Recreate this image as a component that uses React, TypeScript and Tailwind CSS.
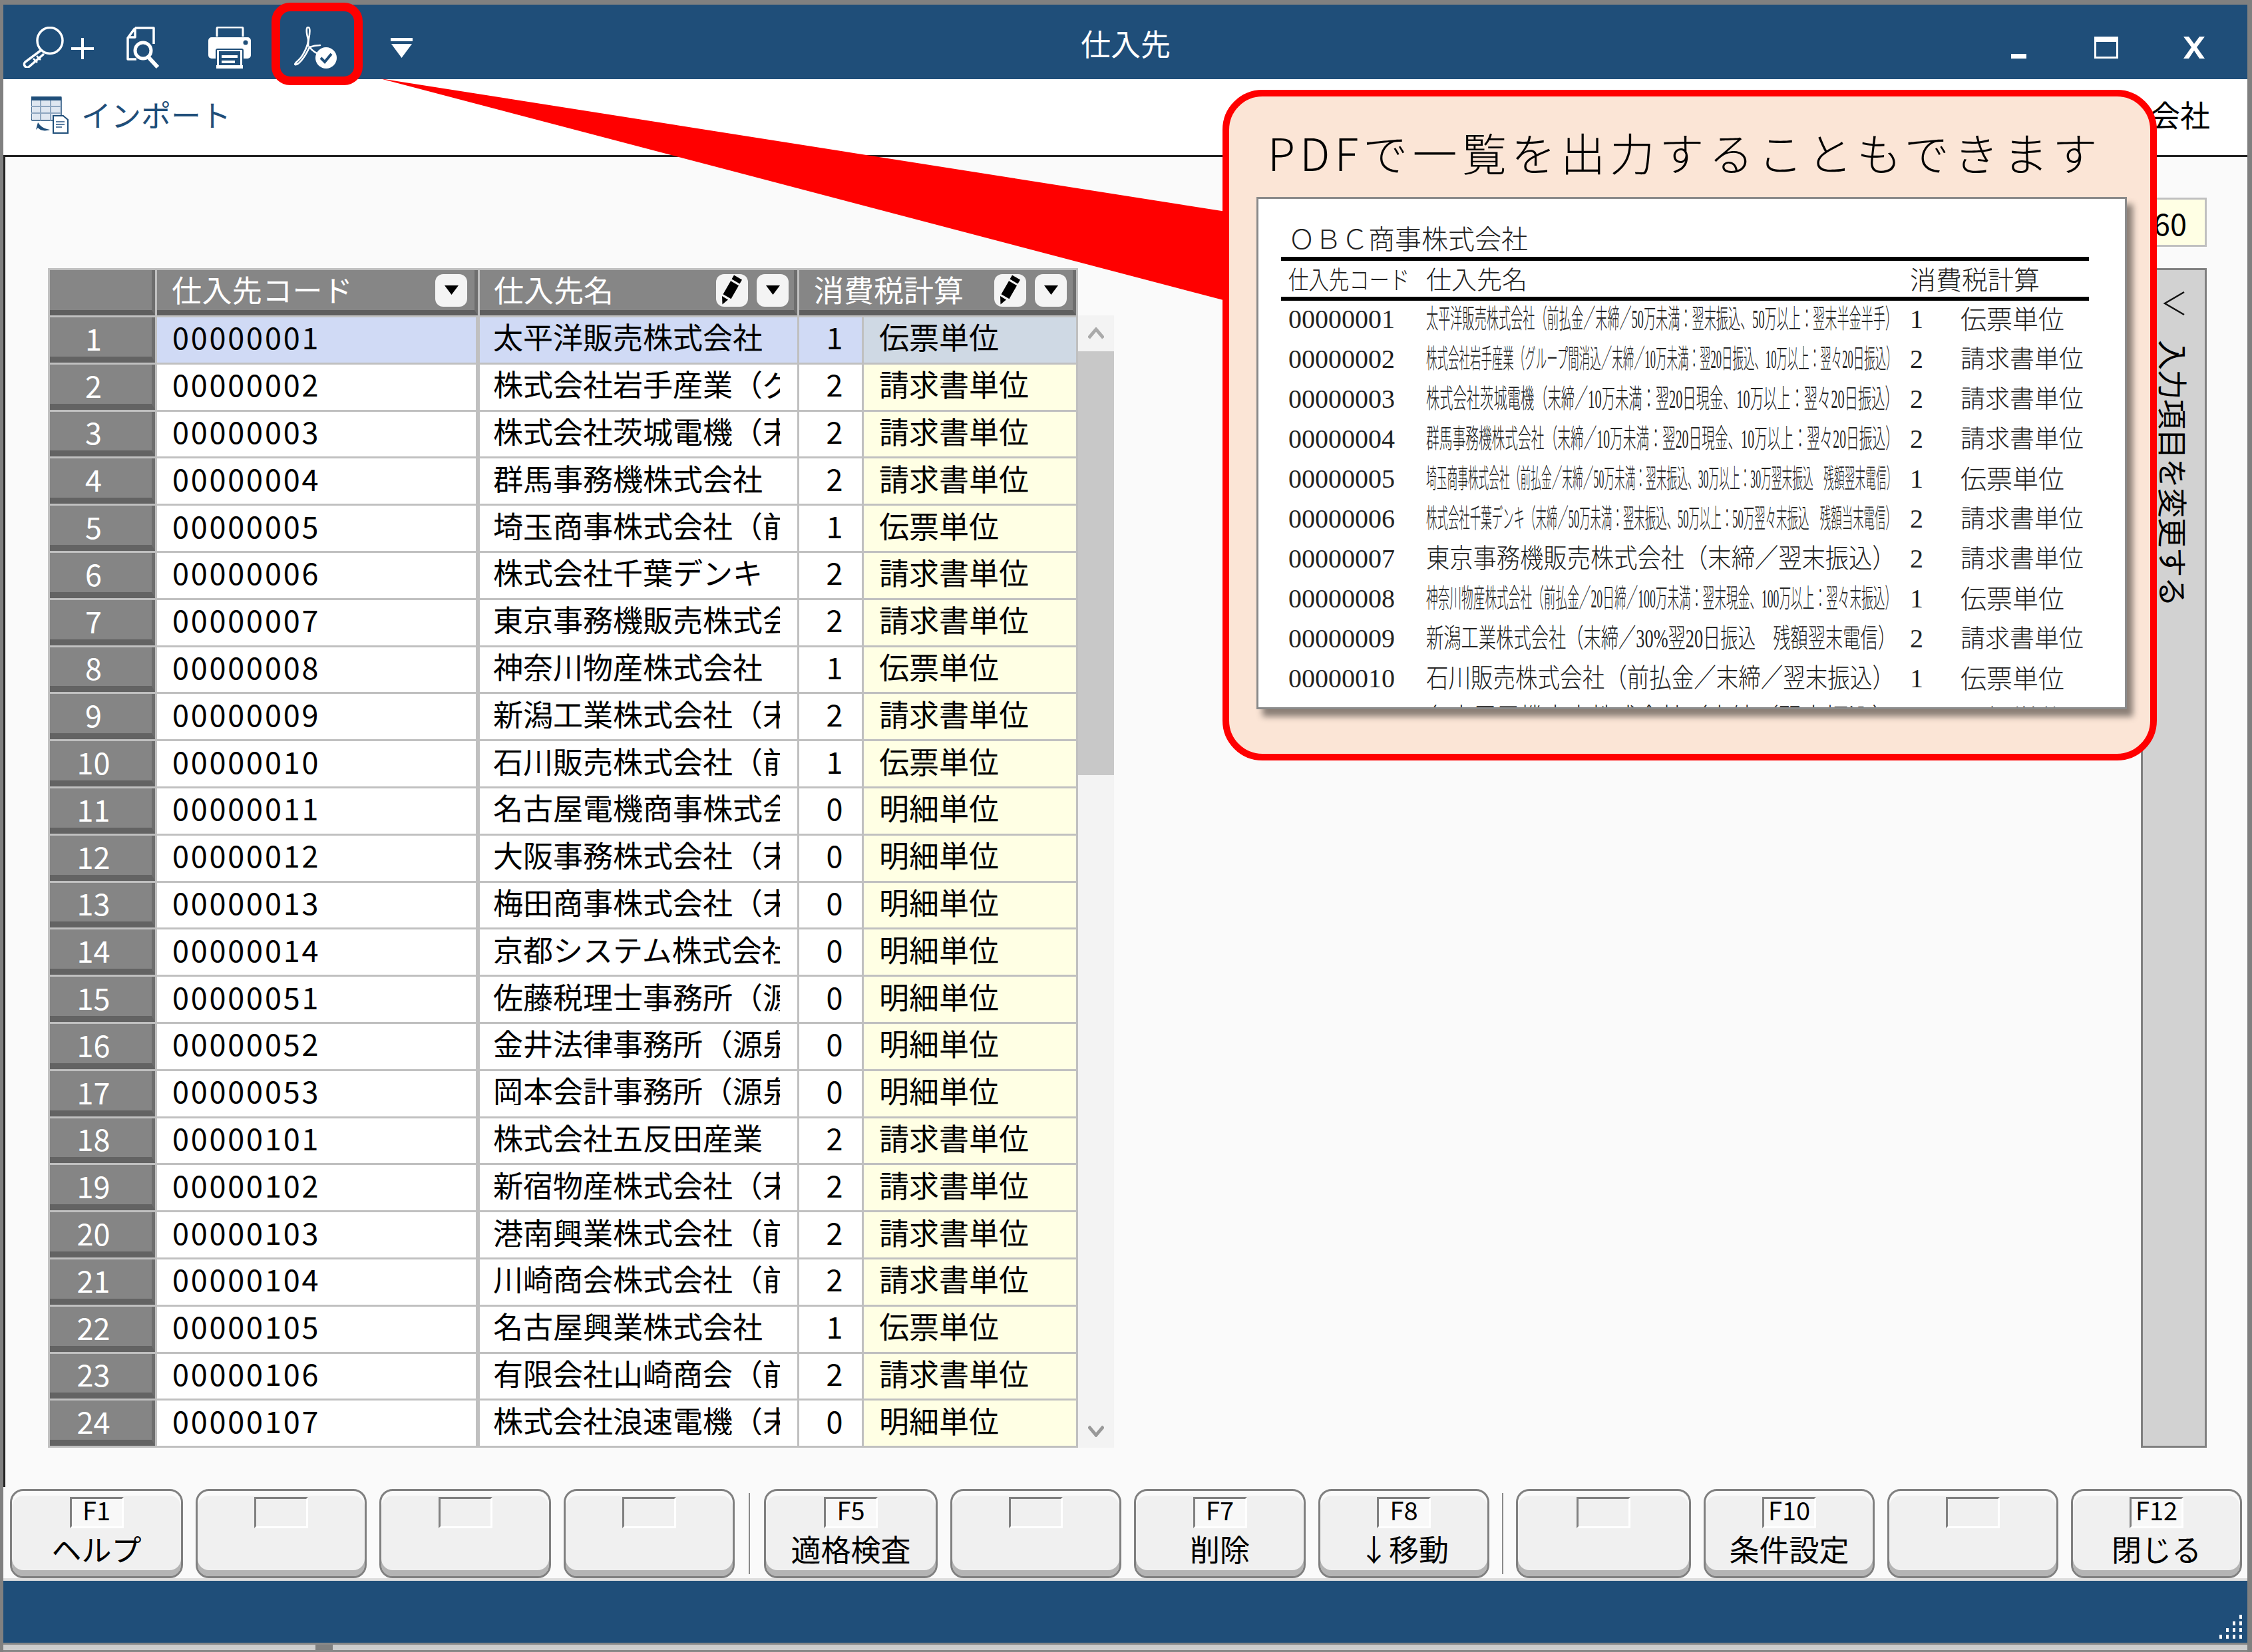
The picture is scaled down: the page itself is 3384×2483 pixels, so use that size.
import React from 'react';

const BLUE = '#1f4e79';

const rows: [string, string, string, string][] = [
  ['00000001', '太平洋販売株式会社', '1', '伝票単位'],
  ['00000002', '株式会社岩手産業（グループ間消込', '2', '請求書単位'],
  ['00000003', '株式会社茨城電機（末締', '2', '請求書単位'],
  ['00000004', '群馬事務機株式会社', '2', '請求書単位'],
  ['00000005', '埼玉商事株式会社（前払金', '1', '伝票単位'],
  ['00000006', '株式会社千葉デンキ', '2', '請求書単位'],
  ['00000007', '東京事務機販売株式会社', '2', '請求書単位'],
  ['00000008', '神奈川物産株式会社', '1', '伝票単位'],
  ['00000009', '新潟工業株式会社（末締', '2', '請求書単位'],
  ['00000010', '石川販売株式会社（前払金', '1', '伝票単位'],
  ['00000011', '名古屋電機商事株式会社', '0', '明細単位'],
  ['00000012', '大阪事務株式会社（末締', '0', '明細単位'],
  ['00000013', '梅田商事株式会社（末締', '0', '明細単位'],
  ['00000014', '京都システム株式会社', '0', '明細単位'],
  ['00000051', '佐藤税理士事務所（源泉', '0', '明細単位'],
  ['00000052', '金井法律事務所（源泉', '0', '明細単位'],
  ['00000053', '岡本会計事務所（源泉', '0', '明細単位'],
  ['00000101', '株式会社五反田産業', '2', '請求書単位'],
  ['00000102', '新宿物産株式会社（末締', '2', '請求書単位'],
  ['00000103', '港南興業株式会社（前払金', '2', '請求書単位'],
  ['00000104', '川崎商会株式会社（前払金', '2', '請求書単位'],
  ['00000105', '名古屋興業株式会社', '1', '伝票単位'],
  ['00000106', '有限会社山崎商会（前払金', '2', '請求書単位'],
  ['00000107', '株式会社浪速電機（末締', '0', '明細単位'],
];

const reportRows: { code: string; name: string; squeeze: string; flag: string; unit: string }[] = [
  { code: '00000001', name: '太平洋販売株式会社（前払金／末締／50万未満：翌末振込、50万以上：翌末半金半手）', squeeze: 'scale-x-[0.454]', flag: '1', unit: '伝票単位' },
  { code: '00000002', name: '株式会社岩手産業（グループ間消込／末締／10万未満：翌20日振込、10万以上：翌々20日振込）', squeeze: 'scale-x-[0.412]', flag: '2', unit: '請求書単位' },
  { code: '00000003', name: '株式会社茨城電機（末締／10万未満：翌20日現金、10万以上：翌々20日振込）', squeeze: 'scale-x-[0.507]', flag: '2', unit: '請求書単位' },
  { code: '00000004', name: '群馬事務機株式会社（末締／10万未満：翌20日現金、10万以上：翌々20日振込）', squeeze: 'scale-x-[0.493]', flag: '2', unit: '請求書単位' },
  { code: '00000005', name: '埼玉商事株式会社（前払金／末締／50万未満：翌末振込、30万以上：30万翌末振込　残額翌末電信）', squeeze: 'scale-x-[0.393]', flag: '1', unit: '伝票単位' },
  { code: '00000006', name: '株式会社千葉デンキ（末締／50万未満：翌末振込、50万以上：50万翌々末振込　残額当末電信）', squeeze: 'scale-x-[0.411]', flag: '2', unit: '請求書単位' },
  { code: '00000007', name: '東京事務機販売株式会社（末締／翌末振込）', squeeze: 'scale-x-[0.882]', flag: '2', unit: '請求書単位' },
  { code: '00000008', name: '神奈川物産株式会社（前払金／20日締／100万未満：翌末現金、100万以上：翌々末振込）', squeeze: 'scale-x-[0.442]', flag: '1', unit: '伝票単位' },
  { code: '00000009', name: '新潟工業株式会社（末締／30%翌20日振込　残額翌末電信）', squeeze: 'scale-x-[0.657]', flag: '2', unit: '請求書単位' },
  { code: '00000010', name: '石川販売株式会社（前払金／末締／翌末振込）', squeeze: 'scale-x-[0.838]', flag: '1', unit: '伝票単位' },
  { code: '00000011', name: '名古屋電機商事株式会社（末締／翌末振込）', squeeze: 'scale-x-[0.882]', flag: '0', unit: '明細単位' },
];

const fkeys: { width: string; f?: string; label?: string; sep?: string }[] = [
  { width: 'w-[260px]', f: 'F1', label: 'ヘルプ' },
  { width: 'w-[257px]' },
  { width: 'w-[258px]' },
  { width: 'w-[257px]', sep: 'mx-[2px]' },
  { width: 'w-[261px]', f: 'F5', label: '適格検査' },
  { width: 'w-[257px]' },
  { width: 'w-[258px]', f: 'F7', label: '削除' },
  { width: 'w-[257px]', f: 'F8', label: '↓移動', sep: 'mx-0' },
  { width: 'w-[263px]' },
  { width: 'w-[257px]', f: 'F10', label: '条件設定' },
  { width: 'w-[257px]' },
  { width: 'w-[257px]', f: 'F12', label: '閉じる' },
];

const ZoomIcon = () => (
  <svg width="108" height="62" viewBox="0 0 108 62" fill="none" stroke="#fff">
    <ellipse cx="41" cy="21" rx="19" ry="19.5" strokeWidth="3.5" />
    <path d="M27 36L4 53a4 4 0 0 0 6 7L32 41" strokeWidth="3.5" />
    <path d="M21 44l6 6M16 48l6 6" strokeWidth="2.5" />
    <path d="M73 33h34M90 17v32" strokeWidth="4" />
  </svg>
);

const DocSearchIcon = () => (
  <svg width="50" height="63" viewBox="0 0 50 63" fill="none" stroke="#fff">
    <path d="M13 2H41V26M13 2L2 17V49H15M13 2V16H2" strokeWidth="3.5" strokeLinejoin="round" />
    <circle cx="25" cy="36" r="12" strokeWidth="5" />
    <path d="M33 46L47 61" strokeWidth="6" />
  </svg>
);

const PrinterIcon = () => (
  <svg width="64" height="63" viewBox="0 0 64 63">
    <path d="M13 15V3a2 2 0 0 1 2-2H50a2 2 0 0 1 2 2V15" fill="none" stroke="#fff" strokeWidth="3" />
    <rect x="0" y="16" width="64" height="32" rx="5" fill="#fff" />
    <circle cx="56" cy="24" r="3.5" fill={BLUE} />
    <rect x="12" y="34" width="40" height="29" rx="2" fill="#fff" stroke={BLUE} strokeWidth="2" />
    <rect x="16" y="37" width="32" height="23" fill={BLUE} />
    <rect x="20" y="43" width="24" height="4" fill="#fff" />
    <rect x="20" y="51" width="20" height="4" fill="#fff" />
    <rect x="12" y="58" width="40" height="5" fill="#fff" />
  </svg>
);

const PdfIcon = () => (
  <svg width="64" height="63" viewBox="0 0 64 63">
    <path
      d="M21 1c-3 0-3 7 0 18c1 8 -8 26 -15 32c-5 4 -6 7 -3 6c5-1 13-11 20-26c6 7 12 10 16 10M21 1c3 0 3 7 1 17c-1 5 -1 8 -1 11M23 31c5-2 11-3 16-3"
      fill="none"
      stroke="#fff"
      strokeWidth="2.6"
      strokeLinecap="round"
    />
    <circle cx="48" cy="47" r="16" fill="#fff" />
    <path d="M40 47l6 6l10-12" fill="none" stroke={BLUE} strokeWidth="4" />
  </svg>
);

const MenuArrow = () => (
  <svg width="33" height="30" viewBox="0 0 33 30" fill="#fff">
    <rect x="0" y="0" width="33" height="5" />
    <path d="M1 9H32L16.5 30Z" />
  </svg>
);

const ImportIcon = () => (
  <svg width="56" height="56" viewBox="0 0 56 56">
    <rect x="0" y="0" width="45" height="36" rx="2" fill="#dfe7f1" stroke={BLUE} strokeWidth="1.5" />
    <rect x="0" y="0" width="45" height="6" fill={BLUE} />
    <path d="M0 15H45M0 25H45M14 6V36M29 6V36" stroke="#8ea6c0" strokeWidth="2" />
    <path d="M7 50L10 39L13 43C17 47 22 49 28 50C20 53 13 51 10 47Z" fill={BLUE} />
    <path d="M33 29H48L55 35V55H33Z" fill="#fff" stroke={BLUE} strokeWidth="2" />
    <path d="M37 38H50M37 42H50M37 46H46" stroke="#5b7da0" strokeWidth="2" />
  </svg>
);

const DropButton = () => (
  <span className="flex h-[49px] w-[48px] shrink-0 items-center justify-center rounded-[12px] bg-[#f4f4f4]">
    <svg width="21" height="14" viewBox="0 0 21 14">
      <path d="M0 0H21L10.5 14Z" fill="#000" />
    </svg>
  </span>
);

const PencilButton = () => (
  <span className="flex h-[49px] w-[48px] shrink-0 items-center justify-center rounded-[12px] bg-[#f4f4f4]">
    <svg width="48" height="49" viewBox="0 0 48 49" fill="#000">
      <path d="M27 1.5L39 8.5L35.5 14.6L23.5 7.6Z" />
      <path d="M22 10.2L34 17.2L22.5 37.2L10.5 30.2Z" />
      <path d="M9 33L18 38.5L9.5 45.5Z" />
    </svg>
  </span>
);

const headCell = 'flex items-center border-r-[5px] border-b-[8px] border-r-[#6e6e6e] border-b-[#5f5f5f] bg-[#868686] text-white';

export default function App() {
  return (
    <div className="relative h-[2483px] w-[3384px] overflow-hidden bg-white text-[45px] leading-none text-black [font-family:'Noto_Sans_CJK_JP',sans-serif]">
      <div className="flex h-full flex-col border-t-[7px] border-r-[7px] border-l-[5px] border-[#808080]">
        {/* title bar */}
        <div className="flex h-[112px] shrink-0 items-center bg-[#1f4e79] text-white">
          <div className="flex flex-1 items-start pt-[17px] pl-[29px]">
            <ZoomIcon />
            <span className="ml-[48px]"><DocSearchIcon /></span>
            <span className="ml-[73px]"><PrinterIcon /></span>
            <span className="ml-[65px]"><PdfIcon /></span>
            <span className="mt-[17px] ml-[81px]"><MenuArrow /></span>
          </div>
          <span className="ml-[36px] pt-[3px]">仕入先</span>
          <div className="flex flex-1 justify-end pt-[17px] pr-[64px]">
            <svg width="291" height="34" viewBox="0 0 291 34" fill="#fff">
              <rect x="0" y="26" width="23" height="7" />
              <path d="M125 0H161V33H125ZM128 8V30H158V8Z" fillRule="evenodd" />
              <path d="M259 0H267L275 11L283 0H291L279 16L291 33H283L275 21L267 33H259L271 16Z" />
            </svg>
          </div>
        </div>

        {/* toolbar */}
        <div className="flex h-[117px] shrink-0 items-center justify-between border-b-[3px] border-[#222] bg-white pr-[56px] pl-[42px]">
          <div className="flex items-center gap-[19px]">
            <span className="mt-[-6px]"><ImportIcon /></span>
            <span className="mt-[-10px] text-[#1f4e79]">インポート</span>
          </div>
          <span className="mt-[-10px]">ＯＢＣ商事株式会社</span>
        </div>

        {/* main */}
        <div className="flex min-h-0 flex-1 justify-between border-l-[3px] border-[#222] bg-[#fafafa] pr-[61px] pl-[64px]">
          <div className="flex items-start pt-[167px]">
            <div className="grid grid-cols-[158px_482px_477px_94px_319px] grid-rows-[68px_repeat(24,67.8px)] gap-[3px] border-[3px] border-[#c0c0c0] bg-[#c0c0c0]">
              <div className={headCell} />
              <div className={`${headCell} justify-between pr-[11px] pl-[22px]`}>
                <span className="mt-[-4px] tracking-[0.4px]">仕入先コード</span>
                <DropButton />
              </div>
              <div className={`${headCell} justify-between pr-[8px] pl-[21px]`}>
                <span className="mt-[-4px]">仕入先名</span>
                <span className="flex gap-[13px]"><PencilButton /><DropButton /></span>
              </div>
              <div className={`${headCell} col-span-2 justify-between pr-[9px] pl-[22px]`}>
                <span className="mt-[-4px]">消費税計算</span>
                <span className="flex gap-[13px]"><PencilButton /><DropButton /></span>
              </div>
              {rows.map(([code, name, flag, unit], i) => (
                <React.Fragment key={code}>
                  <div className="flex items-center justify-center border-r-[5px] border-b-[9px] border-r-[#6e6e6e] border-b-[#636363] bg-[#858585] pt-[2px] pr-[22px] text-white">
                    {i + 1}
                  </div>
                  <div className={`flex items-center border-r-[3px] border-[#c0c0c0] pb-[10px] pl-[23px] tracking-[2.8px] ${i === 0 ? 'bg-[#d0daf5]' : 'bg-white'}`}>
                    {code}
                  </div>
                  <div className={`flex items-center pb-[10px] pl-[20px] ${i === 0 ? 'bg-[#d0daf5]' : 'bg-white'}`}>
                    <span className="block w-[431px] overflow-hidden whitespace-nowrap">{name}</span>
                  </div>
                  <div className={`flex items-center justify-center pb-[10px] pl-[12px] ${i === 0 ? 'bg-[#d0daf5]' : 'bg-white'}`}>
                    {flag}
                  </div>
                  <div className={`flex items-center pb-[10px] pl-[23px] ${i === 0 ? 'bg-[#cfd9e4]' : 'bg-[#ffffe4]'}`}>
                    {unit}
                  </div>
                </React.Fragment>
              ))}
            </div>

            {/* scroll bar */}
            <div className="mt-[71px] flex h-[1702px] w-[54px] flex-col bg-[#f3f3f3]">
              <div className="flex h-[54px] shrink-0 items-center justify-center">
                <svg width="24" height="18" viewBox="0 0 24 18" fill="none" stroke="#aaa" strokeWidth="5">
                  <path d="M1 16L12 3L23 16" />
                </svg>
              </div>
              <div className="h-[637px] shrink-0 bg-[#c8c8c8]" />
              <div className="flex flex-1 items-end justify-center pb-[16px]">
                <svg width="24" height="18" viewBox="0 0 24 18" fill="none" stroke="#999" strokeWidth="5">
                  <path d="M1 2L12 15L23 2" />
                </svg>
              </div>
            </div>
          </div>

          {/* right side */}
          <div className="flex flex-col items-end pt-[61px]">
            <div className="flex h-[74px] w-[300px] items-center justify-end border-[3px] border-[#c0c0c0] bg-[#ffffe4] pr-[27px]">
              60
            </div>
            <div className="mt-[32px] flex h-[1773px] w-[99px] flex-col items-center border-[3px] border-[#808080] bg-[#d2d2d2] pt-[31px]">
              <svg width="34" height="38" viewBox="0 0 34 38" fill="none" stroke="#111" strokeWidth="2.5">
                <path d="M32 2L3 19L32 36" />
              </svg>
              <span className="mt-[36px] tracking-[-0.5px] whitespace-nowrap [text-orientation:sideways] [writing-mode:vertical-rl]">入力項目を変更する</span>
            </div>
          </div>
        </div>

        {/* function keys */}
        <div className="flex h-[141px] shrink-0 gap-[19px] border-b-[4px] border-[#dedede] bg-[#fafafa] pt-[3px] pl-[10px]">
          {fkeys.map((k, i) => (
            <React.Fragment key={i}>
              <div className={`${k.width} flex h-[134px] shrink-0 flex-col items-center rounded-[20px] border-[3px] border-[#808080] bg-[#f0f0f0] pt-[9px] shadow-[inset_0_-9px_0_#b4b4b4,inset_0_7px_0_#fafafa]`}>
                <div className={`h-[47px] w-[81px] shrink-0 border-t-[3px] border-r-[3px] border-b-[3px] border-l-[3px] border-t-[#808080] border-r-white border-b-white border-l-[#808080] text-center text-[38px] leading-[32px] ${k.f ? 'bg-[#f8f8f8]' : ''}`}>
                  {k.f}
                </div>
                <span className="mt-[8px]">{k.label}</span>
              </div>
              {k.sep && <div className={`${k.sep} mt-[6px] h-[122px] w-[2px] shrink-0 bg-[#8a8a8a]`} />}
            </React.Fragment>
          ))}
        </div>

        {/* status bar */}
        <div className="flex h-[93px] shrink-0 items-end justify-end bg-[#1f4e79] pr-[7px] pb-[6px]">
          <svg width="36" height="36" viewBox="0 0 36 36" fill="#fff">
            <rect x="31" y="0" width="4" height="6" />
            <rect x="21" y="10" width="4" height="6" /><rect x="31" y="10" width="4" height="6" />
            <rect x="11" y="20" width="4" height="6" /><rect x="21" y="20" width="4" height="6" /><rect x="31" y="20" width="4" height="6" />
            <rect x="1" y="30" width="4" height="6" /><rect x="11" y="30" width="4" height="6" /><rect x="21" y="30" width="4" height="6" /><rect x="31" y="30" width="4" height="6" />
          </svg>
        </div>
        <div className="h-[14px] shrink-0 border-t-[3px] border-b-[3px] border-[#888] bg-[#cdcdcd] pl-[469px]">
          <div className="h-full w-[26px] bg-[#808080]" />
        </div>
      </div>

      {/* red pointer and highlight lie over the window */}
      <svg className="absolute top-0 left-0" width="3384" height="2483" fill="#ff0000">
        <path d="M571 118L1842 318V452Z" />
      </svg>
      <div className="absolute top-[4px] left-[408px] h-[124px] w-[137px] rounded-[28px] border-[13px] border-[#ff0000]" />

      {/* call-out */}
      <div className="absolute top-[135px] left-[1837px] flex h-[1008px] w-[1404px] flex-col rounded-[60px] border-[10px] border-[#ff0000] bg-[#fbe5d6]">
        <div className="flex h-[151px] shrink-0 items-center pt-[13px] pl-[58px] text-[67px] font-light tracking-[7.2px] whitespace-nowrap">
          PDFで一覧を出力することもできます
        </div>
        <div className="ml-[41px] h-[770px] w-[1308px] overflow-hidden border-[3px] border-[#8a8a8a] bg-white text-[38px] font-light text-[#222] shadow-[9px_11px_9px_rgba(0,0,0,0.45)] [font-family:'Liberation_Serif','Noto_Sans_CJK_JP',serif]">
          <div className="pt-[37px] pl-[45px] text-[40px] leading-[50px]">ＯＢＣ商事株式会社</div>
          <div className="ml-[34px] h-[6px] w-[1214px] bg-black" />
          <div className="flex h-[54px] items-center pt-[4px] pl-[45px]">
            <span className="w-[207px]"><span className="block w-max origin-left scale-x-[0.8]">仕入先コード</span></span>
            <span className="w-[727px]">仕入先名</span>
            <span className="text-[39px]">消費税計算</span>
          </div>
          <div className="ml-[34px] h-[6px] w-[1214px] bg-black" />
          <div className="mt-[1px]">
            {reportRows.map((r) => (
              <div key={r.code} className="flex h-[60px] items-center pb-[6px] pl-[45px] whitespace-nowrap">
                <span className="w-[207px] shrink-0 text-[40px]">{r.code}</span>
                <span className="w-[727px] shrink-0">
                  <span className={`block w-max origin-left text-[40px] ${r.squeeze}`}>{r.name}</span>
                </span>
                <span className="w-[76px] shrink-0 text-[40px]">{r.flag}</span>
                <span className={r.unit.length === 4 ? 'text-[39px]' : 'text-[37px]'}>{r.unit}</span>
              </div>
            ))}
          </div>
        </div>
      </div>
    </div>
  );
}
